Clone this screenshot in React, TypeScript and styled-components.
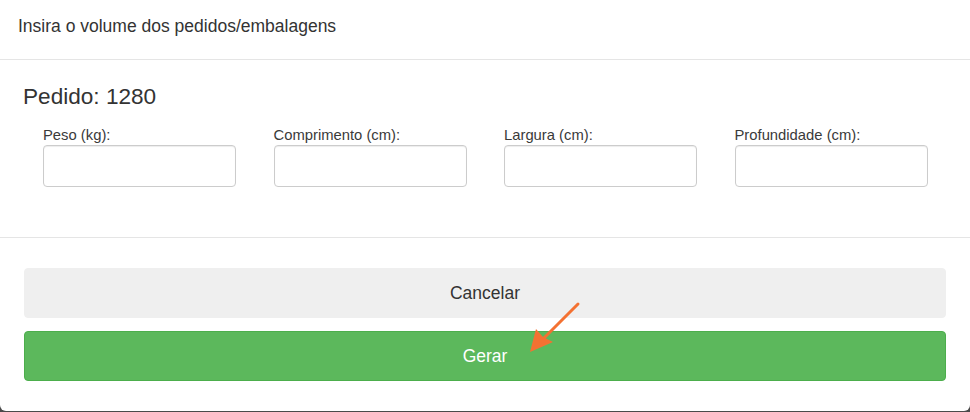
import styled, { createGlobalStyle } from 'styled-components';

const GlobalStyle = createGlobalStyle`
  html, body {
    margin: 0;
    padding: 0;
    background: #4a4a4a;
  }
  body {
    font-family: "Liberation Sans", Arial, sans-serif;
    color: #333;
  }
  * {
    box-sizing: border-box;
  }
`;

const Modal = styled.div`
  position: relative;
  width: 970px;
  height: 411px;
  background: #fff;
  border-radius: 0 0 6px 6px;
  display: flex;
  flex-direction: column;
`;

const Header = styled.div`
  height: 60px;
  padding: 15px 18px 0;
  border-bottom: 1px solid #e5e5e5;
`;

const Title = styled.h4`
  margin: 0;
  font-size: 17.5px;
  line-height: 22px;
  font-weight: normal;
  color: #333;
`;

const Body = styled.div`
  padding: 24px 25px 50px 23px;
  border-bottom: 1px solid #e5e5e5;
`;

const OrderTitle = styled.h3`
  margin: 0 0 16px;
  font-size: 22.6px;
  line-height: 26px;
  font-weight: normal;
  color: #333;
`;

const Fields = styled.div`
  display: grid;
  grid-template-columns: repeat(4, 1fr);
`;

const Field = styled.div`
  display: flex;
  flex-direction: column;
  padding: 0 17.5px 0 20px;
`;

const Label = styled.label`
  font-size: 14.8px;
  line-height: 18px;
  color: #3a3a3a;
  margin-bottom: 1px;
`;

const Input = styled.input`
  height: 42px;
  width: 100%;
  border: 1px solid #ccc;
  border-radius: 4px;
  box-shadow: inset 0 1px 1px rgba(0, 0, 0, 0.075);
  outline: none;
  padding: 6px 12px;
  font-size: 15px;
`;

const Footer = styled.div`
  padding: 30px 24px;
  display: flex;
  flex-direction: column;
  gap: 13px;
`;

const Button = styled.button<{ $variant: 'default' | 'success' }>`
  height: 50px;
  width: 100%;
  border-radius: 4px;
  font-family: "Liberation Sans", Arial, sans-serif;
  font-size: 17.5px;
  cursor: pointer;
  border: 1px solid ${({ $variant }) => ($variant === 'success' ? '#4cae4c' : '#efefef')};
  background: ${({ $variant }) => ($variant === 'success' ? '#5cb85c' : '#efefef')};
  color: ${({ $variant }) => ($variant === 'success' ? '#fff' : '#333')};
`;

const Arrow = styled.svg`
  position: absolute;
  left: 520px;
  top: 295px;
  pointer-events: none;
`;

const fields = ['Peso (kg):', 'Comprimento (cm):', 'Largura (cm):', 'Profundidade (cm):'];

export default function App() {
  return (
    <>
      <GlobalStyle />
      <Modal>
        <Header>
          <Title>Insira o volume dos pedidos/embalagens</Title>
        </Header>
        <Body>
          <OrderTitle>Pedido: 1280</OrderTitle>
          <Fields>
            {fields.map((f) => (
              <Field key={f}>
                <Label>{f}</Label>
                <Input type="text" />
              </Field>
            ))}
          </Fields>
        </Body>
        <Footer>
          <Button $variant="default">Cancelar</Button>
          <Button $variant="success">Gerar</Button>
        </Footer>
        {/* annotation arrow drawn over the button */}
        <Arrow width="70" height="70" viewBox="0 0 70 70">
          <line x1="58" y1="9" x2="22" y2="45" stroke="#f47132" strokeWidth="3" strokeLinecap="round" />
          <path d="M10 57 L16 34 L23 42 L33 47 Z" fill="#f47132" />
        </Arrow>
      </Modal>
    </>
  );
}
